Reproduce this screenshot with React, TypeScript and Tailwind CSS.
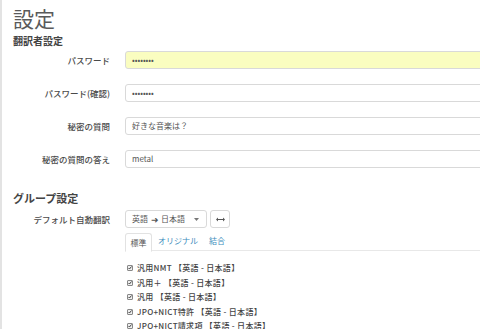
import React from "react";

const font = { fontFamily: '"Noto Sans CJK JP", "Noto Sans", sans-serif' };

function Row({ label, children }: { label: string; children: React.ReactNode }) {
  return (
    <div className="flex items-center h-[18px]">
      <div className="w-[108px] shrink-0 text-right text-[8.5px] text-[#4a4a4a] font-medium leading-none">{label}</div>
      <div className="ml-[15px] flex-1 min-w-0">{children}</div>
    </div>
  );
}

function Input({ value, yellow }: { value: string; yellow?: boolean }) {
  return (
    <div
      className={`h-[18px] w-[400px] rounded-[3px] border border-[#d9d9d9] flex items-center pl-[6px] text-[8px] text-[#555] leading-none ${
        yellow ? "bg-[#fafdc0]" : "bg-white"
      }`}
    >
      {value}
    </div>
  );
}

const items = [
  "汎用NMT 【英語 - 日本語】",
  "汎用＋ 【英語 - 日本語】",
  "汎用 【英語 - 日本語】",
  "JPO+NICT特許 【英語 - 日本語】",
  "JPO+NICT請求項 【英語 - 日本語】",
];

export default function App() {
  return (
    <div className="w-[480px] h-[329px] overflow-hidden bg-white flex" style={font}>
      <div className="w-[2px] shrink-0 bg-[#e3e3e3]" />
      <div className="flex-1 min-w-0 pl-[11px] flex flex-col">
        <div className="pt-[6px] text-[21px] leading-[24px] text-[#5a5a5a] font-normal">設定</div>
        <div className="mt-[5px] text-[10px] leading-[12px] font-bold text-[#444]">翻訳者設定</div>
        <div className="mt-[4px] flex flex-col gap-[15px] -ml-[11px]">
          <Row label="パスワード"><Input value="••••••••" yellow /></Row>
          <Row label="パスワード(確認)"><Input value="••••••••" /></Row>
          <Row label="秘密の質問"><Input value="好きな音楽は？" /></Row>
          <Row label="秘密の質問の答え"><Input value="metal" /></Row>
        </div>
        <div className="mt-[16px] h-px bg-[#eeeeee]" />
        <div className="mt-[8px] text-[11px] leading-[13px] font-bold text-[#444]">グループ設定</div>
        <div className="-ml-[11px] mt-[5px] flex">
          <div className="w-[108px] shrink-0 text-right text-[8.5px] text-[#4a4a4a] font-medium pt-[5px] leading-none">デフォルト自動翻訳</div>
          <div className="ml-[15px] flex-1 min-w-0 flex flex-col">
            <div className="flex gap-[3px]">
              <div className="h-[18px] w-[82px] rounded-[3px] border border-[#d9d9d9] flex items-center pl-[6px] text-[8px] text-[#555] leading-none">
                <span>英語</span>
                <span className="ml-[3px] text-[9px]">➜</span>
                <span className="ml-[2px]">日本語</span>
                <svg className="ml-[9px]" width="5" height="3" viewBox="0 0 5 3"><path d="M0 0h5L2.5 3z" fill="#777" /></svg>
              </div>
              <div className="h-[18px] w-[20px] rounded-[3px] border border-[#d9d9d9] flex items-center justify-center">
                <svg width="9" height="5" viewBox="0 0 9 5"><path d="M0 2.5l2-2v1.5h5V0.5l2 2-2 2V3H2v1.5z" fill="#555" /></svg>
              </div>
            </div>
            <div className="mt-[4px] flex items-end h-[19px]">
              <div className="h-[19px] w-[27px] border border-[#e2e2e2] border-b-white rounded-t-[3px] flex items-center justify-center text-[8px] text-[#555] bg-white relative top-px">標準</div>
              <div className="flex-1 h-[19px] border-b border-[#e8e8e8] flex items-center text-[8px] text-[#3c8dbc]">
                <span className="ml-[6px]">オリジナル</span>
                <span className="ml-[11px]">結合</span>
              </div>
            </div>
            <div className="mt-[12px] flex flex-col gap-[4px] pl-[2px]">
              {items.map((t) => (
                <div key={t} className="flex items-center h-[10.5px] text-[8px] text-[#444] font-medium leading-none">
                  <span className="w-[6px] h-[6px] border border-[#888] rounded-[1px] flex items-center justify-center bg-[#eee]">
                    <svg width="4" height="4" viewBox="0 0 4 4"><path d="M0.5 2l1 1 2-2.5" stroke="#333" strokeWidth="0.9" fill="none" /></svg>
                  </span>
                  <span className="ml-[4px] tracking-[0.3px]">{t}</span>
                </div>
              ))}
            </div>
          </div>
        </div>
      </div>
    </div>
  );
}
